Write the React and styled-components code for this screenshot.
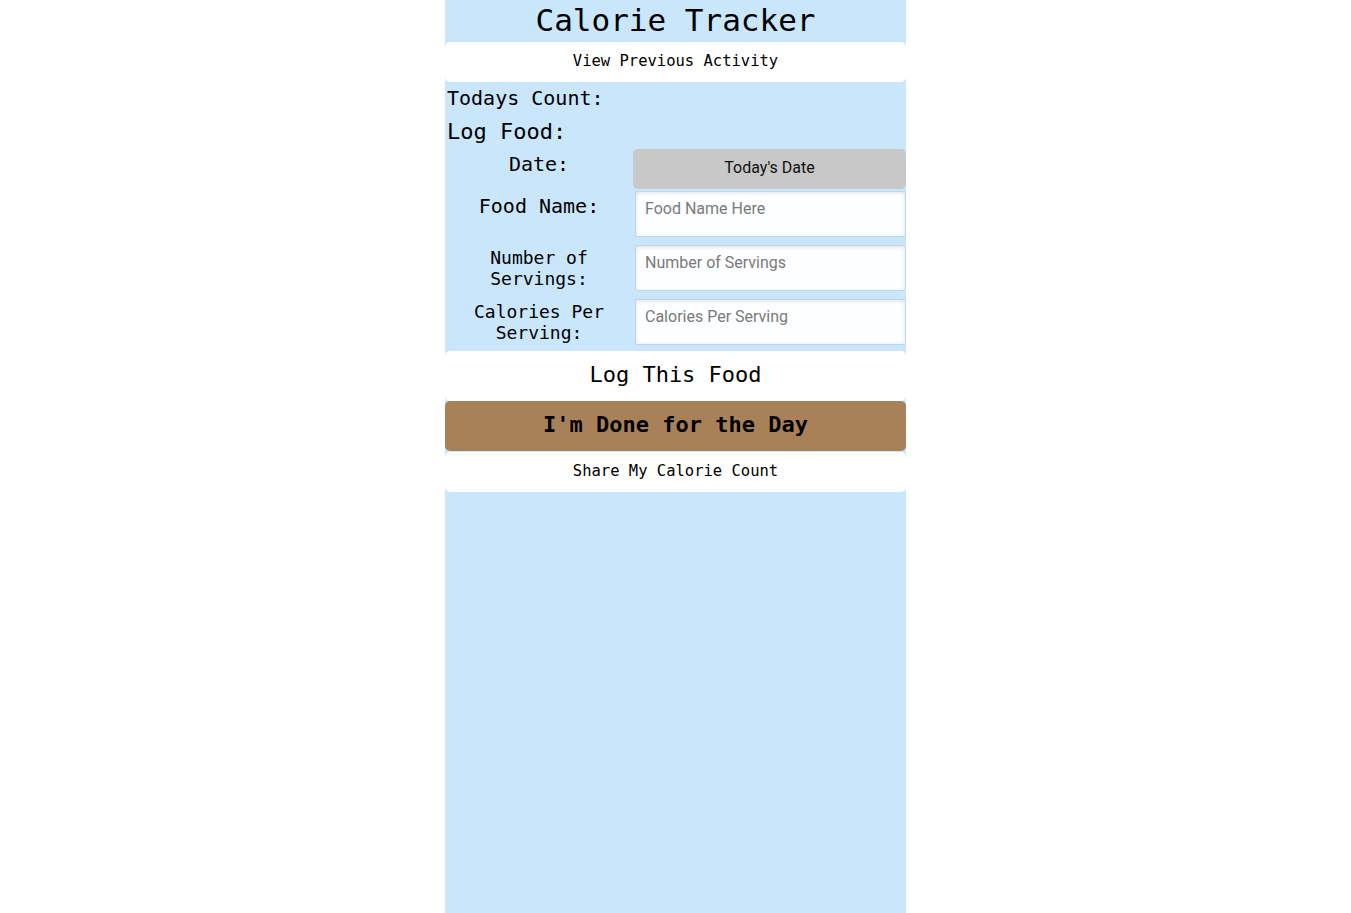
import React, { useState } from 'react'
import styled, { createGlobalStyle } from 'styled-components'

const GlobalStyle = createGlobalStyle`
  html, body {
    margin: 0;
    padding: 0;
    background: #fff;
  }
  body {
    font-family: 'DejaVu Sans Mono', 'Liberation Mono', monospace;
    color: #000;
  }
`

const fields = [
  { label: 'Food Name:', placeholder: 'Food Name Here', key: 'name' },
  { label: 'Number of Servings:', placeholder: 'Number of Servings', key: 'servings', small: true },
  { label: 'Calories Per Serving:', placeholder: 'Calories Per Serving', key: 'calories', small: true },
]

function App() {
  const [food, setFood] = useState({ name: '', servings: '', calories: '' })

  return (
    <>
      <GlobalStyle />
      <Page>
        <Column>
          <Title>Calorie Tracker</Title>
          <WhiteButton>View Previous Activity</WhiteButton>
          <Heading size={20} line={33}>Todays Count:</Heading>
          <Heading size={22} line={34}>Log Food:</Heading>
          <Form>
            <Label>Date:</Label>
            <DateButton>Today's Date</DateButton>
            {fields.map(f => (
              <React.Fragment key={f.key}>
                <Label small={f.small}>{f.label}</Label>
                <Input
                  placeholder={f.placeholder}
                  value={food[f.key]}
                  onChange={e => setFood({ ...food, [f.key]: e.target.value })}
                />
              </React.Fragment>
            ))}
          </Form>
          <WhiteButton big>Log This Food</WhiteButton>
          <DoneButton>I'm Done for the Day</DoneButton>
          <WhiteButton>Share My Calorie Count</WhiteButton>
        </Column>
      </Page>
    </>
  )
}

export default App

const Page = styled.div`
display: flex;
justify-content: center;
min-height: 100vh;
`

const Column = styled.div`
width: 461px;
min-height: 100vh;
background: #c9e6fb;
display: flex;
flex-direction: column;
`

const Title = styled.h1`
margin: 0;
height: 42px;
line-height: 40px;
font-size: 31px;
font-weight: normal;
text-align: center;
`

const WhiteButton = styled.button`
font-family: 'DejaVu Sans Mono', monospace;
font-size: ${p => (p.big ? '22px' : '15.5px')};
height: ${p => (p.big ? '50px' : '40px')};
background: #fff;
color: #000;
border: none;
border-radius: 5px;
width: 100%;
padding: 0 0 ${p => (p.big ? '4px' : '2px')};
cursor: pointer;
`

const Heading = styled.div`
font-size: ${p => p.size}px;
line-height: ${p => p.line}px;
padding-left: 2px;
`

const Form = styled.div`
display: grid;
grid-template-columns: 188px 1fr;
grid-auto-rows: auto;
row-gap: 8px;
padding-bottom: 6px;
align-items: start;

& > :nth-child(2) {
  margin-bottom: -6px;
}
`

const Label = styled.div`
font-size: ${p => (p.small ? '18px' : '20px')};
line-height: 21px;
text-align: center;
padding: ${p => (p.small ? '2px 22px 0' : '5px 0 0')};
`

const DateButton = styled.button`
height: 40px;
background: #c8c8c8;
border: none;
border-radius: 5px;
padding: 0 0 4px;
font-family: 'Roboto', sans-serif;
font-size: 16px;
color: #111;
cursor: pointer;
`

const Input = styled.input`
box-sizing: border-box;
height: 46px;
margin-left: 2px;
padding: 0 9px 12px;
border: 1px solid #bcd6ea;
border-radius: 1px;
background: #fdfeff;
box-shadow: inset 0 1px 4px rgba(0, 0, 0, 0.12);
font-family: 'Roboto', sans-serif;
font-size: 16px;
color: #222;
outline: none;

&::placeholder {
  color: #7a7a7a;
}
`

const DoneButton = styled.button`
height: 50px;
margin-bottom: 1px;
background: #a98159;
border: none;
border-radius: 5px;
padding: 0 0 4px;
font-family: 'DejaVu Sans Mono', monospace;
font-size: 22px;
font-weight: bold;
color: #000;
cursor: pointer;
`
